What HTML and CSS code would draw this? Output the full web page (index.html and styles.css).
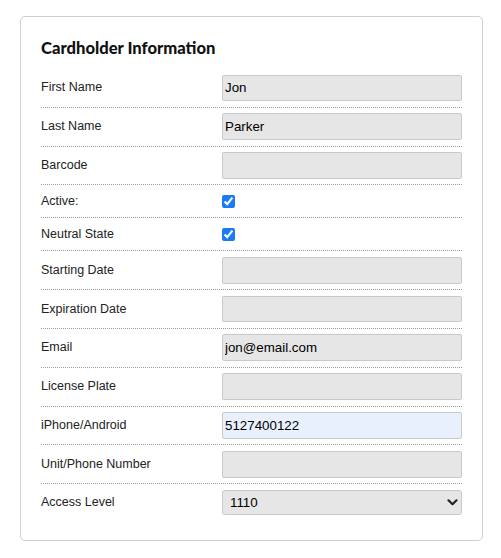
FILE: index.html
```html
<!DOCTYPE html>
<html>
<head>
<meta charset="utf-8">
<link rel="stylesheet" href="styles.css">
</head>
<body>
<div class="page">
  <div class="card">
    <h3 class="title">Cardholder Information</h3>
    <div class="row"><label class="lbl">First Name</label><input class="field" type="text" value="Jon"></div>
    <div class="row"><label class="lbl">Last Name</label><input class="field" type="text" value="Parker"></div>
    <div class="row"><label class="lbl">Barcode</label><input class="field" type="text" value=""></div>
    <div class="row check-row"><label class="lbl">Active:</label><input class="check" type="checkbox" checked></div>
    <div class="row check-row"><label class="lbl">Neutral State</label><input class="check" type="checkbox" checked></div>
    <div class="row"><label class="lbl">Starting Date</label><input class="field" type="text" value=""></div>
    <div class="row"><label class="lbl">Expiration Date</label><input class="field" type="text" value=""></div>
    <div class="row"><label class="lbl">Email</label><input class="field" type="text" value="jon@email.com"></div>
    <div class="row"><label class="lbl">License Plate</label><input class="field" type="text" value=""></div>
    <div class="row"><label class="lbl">iPhone/Android</label><input class="field autofill" type="text" value="5127400122"></div>
    <div class="row"><label class="lbl">Unit/Phone Number</label><input class="field" type="text" value=""></div>
    <div class="row last"><label class="lbl">Access Level</label>
      <div class="select-wrap">
        <select class="sel"><option>1110</option></select>
        <svg class="chev" width="11" height="7" viewBox="0 0 11 7"><path d="M1.5 1.3 L5.5 5.2 L9.5 1.3" fill="none" stroke="#222" stroke-width="2.2" stroke-linecap="round" stroke-linejoin="round"/></svg>
      </div>
    </div>
  </div>
</div>
</body>
</html>
```
FILE: styles.css
```css
html, body {
  margin: 0;
  padding: 0;
  background: #fff;
}
.page {
  padding: 16px 0 0 20px;
}
.card {
  box-sizing: border-box;
  width: 463px;
  height: 525px;
  border: 1px solid #cfcfcf;
  border-radius: 5px;
  padding: 20px;
  font-family: "Liberation Sans", Arial, sans-serif;
}
.title {
  margin: 0 0 12px 0;
  font-family: Lato, "Open Sans", sans-serif;
  font-weight: 900;
  font-size: 16.6px;
  line-height: 20px;
  color: #111;
  padding-top: 1px;
  height: 19px;
}
.row {
  display: grid;
  grid-template-columns: 181px 1fr;
  align-items: center;
  padding: 5.5px 0;
  border-bottom: 1px dotted #9a9a9a;
}
.row.last {
  border-bottom: none;
}
.check-row {
  padding: 8.5px 0;
}
.lbl {
  font-size: 12.5px;
  color: #222;
  line-height: 15px;
}
.field {
  box-sizing: border-box;
  height: 26.8px;
  width: 240px;
  margin: 0;
  padding: 1px 2px;
  border: 1px solid #c9c9c9;
  border-radius: 2px;
  background: #e6e6e6;
  font-family: "Liberation Sans", Arial, sans-serif;
  font-size: 13.33px;
  color: #000;
  outline: none;
}
.field.autofill {
  background: #e8f0fe;
}
.check {
  width: 13px;
  height: 13px;
  margin: 0;
  accent-color: #1a7cf5;
}
.select-wrap {
  position: relative;
  width: 240px;
  height: 25px;
}
.sel {
  appearance: none;
  -webkit-appearance: none;
  box-sizing: border-box;
  width: 240px;
  height: 25px;
  margin: 0;
  padding: 0 20px 0 7px;
  border: 1px solid #c9c9c9;
  border-radius: 3px;
  background: #e6e6e6;
  font-family: "Liberation Sans", Arial, sans-serif;
  font-size: 13.33px;
  color: #000;
}
.chev {
  position: absolute;
  right: 4px;
  top: 9px;
  pointer-events: none;
}
```
